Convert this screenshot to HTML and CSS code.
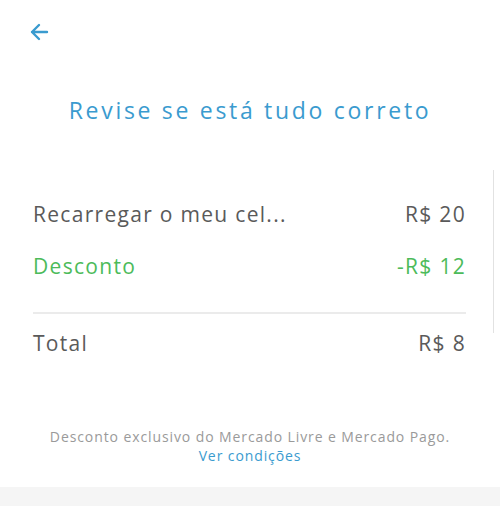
FILE: index.html
```html
<!DOCTYPE html>
<html>
<head>
  <title>Revise se está tudo correto</title>
  <link rel="stylesheet" href="styles.css">
</head>
<body>
  <div class="review">
    <div class="topbar">
      <a class="back" href="#">
        <svg width="20" height="20" viewBox="0 0 20 20">
          <path d="M18 10H3M10 3L3 10l7 7" fill="none" stroke="#3a9bcf" stroke-width="2.4" stroke-linecap="round" stroke-linejoin="round"/>
        </svg>
      </a>
    </div>

    <h1 class="title">Revise se está tudo correto</h1>

    <div class="summary">
      <div class="line">
        <span>Recarregar o meu cel...</span>
        <span>R$ 20</span>
      </div>
      <div class="line discount">
        <span>Desconto</span>
        <span>-R$ 12</span>
      </div>
      <div class="divider"></div>
      <div class="line total">
        <span>Total</span>
        <span>R$ 8</span>
      </div>
    </div>

    <div class="terms">
      <p>Desconto exclusivo do Mercado Livre e Mercado Pago.</p>
      <a href="#">Ver condições</a>
    </div>
  </div>
  <div class="bottom"></div>
</body>
</html>
```

FILE: styles.css
```css
body {
  margin: 0;
  background: #fff;
  font-family: "Open Sans", Arial, sans-serif;
  color: #5a5a5a;
}
.review {
  position: relative;
  height: 487px;
}
.review::after {
  content: "";
  position: absolute;
  left: 493px;
  top: 170px;
  width: 1px;
  height: 163px;
  background: #e2e2e2;
}
.topbar {
  height: 64px;
  display: flex;
  align-items: center;
  padding-left: 29px;
}
.back {
  display: flex;
}
.title {
  margin: 32px 0 0;
  text-align: center;
  font-size: 23px;
  line-height: 28px;
  letter-spacing: 2.7px;
  font-weight: normal;
  color: #3a9bcf;
}
.summary {
  margin-top: 64px;
  padding: 0 34px 0 33px;
}
.line {
  display: flex;
  justify-content: space-between;
  font-size: 21px;
  line-height: 24px;
  letter-spacing: 1.3px;
  padding: 14px 0;
}
.discount {
  color: #4cbb5a;
}
.divider {
  margin-top: 20px;
  height: 2px;
  background: #ebebeb;
}
.total {
  padding-top: 17px;
}
.terms {
  margin-top: 58px;
  text-align: center;
  font-size: 14px;
  line-height: 19px;
  letter-spacing: 0.9px;
  color: #9a9a9a;
}
.terms p {
  margin: 0;
}
.terms a {
  color: #3a9bcf;
  text-decoration: none;
}
.bottom {
  height: 19px;
  background: #f5f5f5;
}
```
